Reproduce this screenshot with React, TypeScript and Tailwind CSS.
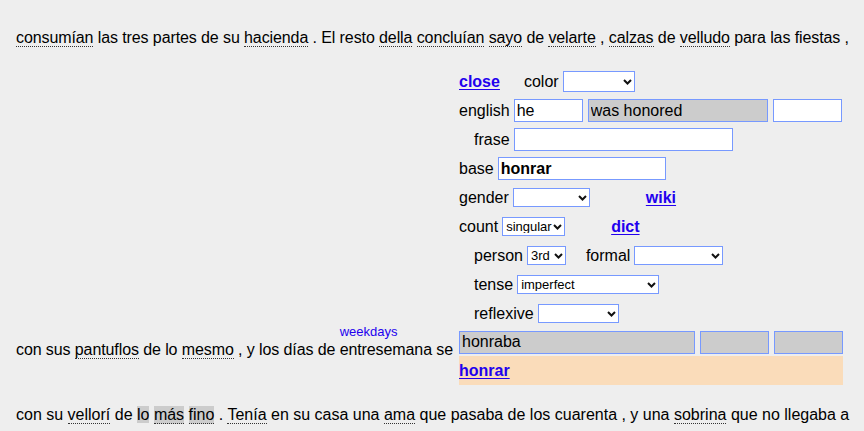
import type { ReactNode } from 'react';

const link = 'font-bold text-[#2200ee] underline underline-offset-[2px]';
const box = 'h-[23px] border border-[#7799ff] px-[2px] text-[16px] text-black outline-none';

function U({ children, hl }: { children: ReactNode; hl?: boolean }) {
  return (
    <span className={`border-b border-dotted border-[#333] ${hl ? 'bg-[#cccccc]' : ''}`}>{children}</span>
  );
}

function Sel({ w, h = 'h-[19px]', value = '' }: { w: string; h?: string; value?: string }) {
  return (
    <span className={`relative inline-flex ${w} ${h}`}>
      <select
        className="h-full w-full appearance-none border border-[#7799ff] bg-white pl-[3px] pr-[12px] text-[13px] leading-none text-black"
        defaultValue={value}
      >
        <option value={value}>{value}</option>
      </select>
      <svg
        className="pointer-events-none absolute right-[3px] top-1/2 -translate-y-1/2"
        width="9"
        height="6"
        viewBox="0 0 9 6"
        fill="none"
      >
        <path d="M1 1L4.5 4.5L8 1" stroke="#111" strokeWidth="2" />
      </svg>
    </span>
  );
}

function Row({ children, indent, className = '' }: { children: ReactNode; indent?: boolean; className?: string }) {
  return (
    <div className={`flex h-[29px] items-center gap-[4px] whitespace-nowrap ${indent ? 'pl-[15px]' : ''} ${className}`}>
      {children}
    </div>
  );
}

function Popup() {
  return (
    <div className="w-[384px] text-[16px] leading-[20px]">
      <Row>
        <a href="#" className={link}>close</a>
        <span className="ml-[20px]">color</span>
        <Sel w="w-[72px]" h="h-[21px]" />
      </Row>
      <Row>
        <span>english</span>
        <input className={`${box} w-[69px] bg-white`} defaultValue="he" />
        <input className={`${box} ml-[1px] w-[180px] bg-[#cccccc]`} defaultValue="was honored" />
        <input className={`${box} ml-[1px] w-[69px] bg-white`} defaultValue="" />
      </Row>
      <Row indent>
        <span>frase</span>
        <input className={`${box} w-[219px] bg-white`} defaultValue="" />
      </Row>
      <Row>
        <span>base</span>
        <input className={`${box} w-[168px] bg-white font-bold`} defaultValue="honrar" />
      </Row>
      <Row>
        <span>gender</span>
        <Sel w="w-[77px]" />
        <a href="#" className={`${link} ml-[52px]`}>wiki</a>
      </Row>
      <Row>
        <span>count</span>
        <Sel w="w-[63px]" value="singular" />
        <a href="#" className={`${link} ml-[42px]`}>dict</a>
      </Row>
      <Row indent>
        <span>person</span>
        <Sel w="w-[39px]" value="3rd" />
        <span className="ml-[16px]">formal</span>
        <Sel w="w-[89px]" />
      </Row>
      <Row indent>
        <span>tense</span>
        <Sel w="w-[142px]" value="imperfect" />
      </Row>
      <Row indent>
        <span>reflexive</span>
        <Sel w="w-[81px]" />
      </Row>
      <div className="flex h-[28px] items-center gap-[5px]">
        <input className={`${box} w-[236px] bg-[#cccccc]`} defaultValue="honraba" />
        <input className={`${box} w-[69px] bg-[#cccccc]`} defaultValue="" />
        <input className={`${box} w-[69px] bg-[#cccccc]`} defaultValue="" />
      </div>
      <div className="flex h-[29px] items-center bg-[#fadcba]">
        <a href="#" className={link}>honrar</a>
      </div>
    </div>
  );
}

export default function App() {
  return (
    <div className="min-h-screen bg-[#eeeeee] pl-4 pt-[28px] font-['Liberation_Sans',Arial,sans-serif] text-[16px] leading-[20px] text-black">
      <p className="whitespace-nowrap tracking-[-0.1px]">
        <U>consumían</U> las tres partes de su <U>hacienda</U> . El resto <U>della</U> <U>concluían</U> <U>sayo</U> de{' '}
        <U>velarte</U> , <U>calzas</U> de <U>velludo</U> para las fiestas ,
      </p>

      <div className="mt-[19px] flex items-end gap-[6px]">
        <p className="mb-[25px] whitespace-nowrap tracking-[-0.1px]">
          con sus <U>pantuflos</U> de lo <U>mesmo</U> , y los días de{' '}
          <span className="relative">
            <span className="absolute bottom-full left-0 mb-[2px] text-[13px] leading-[15px] tracking-normal text-[#2200ee]">
              weekdays
            </span>
            entresemana
          </span>{' '}
          se
        </p>
        <Popup />
      </div>

      <p className="mt-[20px] whitespace-nowrap">
        con su <U>vellorí</U> de <span className="bg-[#cccccc]">lo</span> <U hl>más</U> <U hl>fino</U> . <U>Tenía</U> en su casa una{' '}
        <U>ama</U> que pasaba de los cuarenta , y una <U>sobrina</U> que no llegaba a
      </p>
    </div>
  );
}
